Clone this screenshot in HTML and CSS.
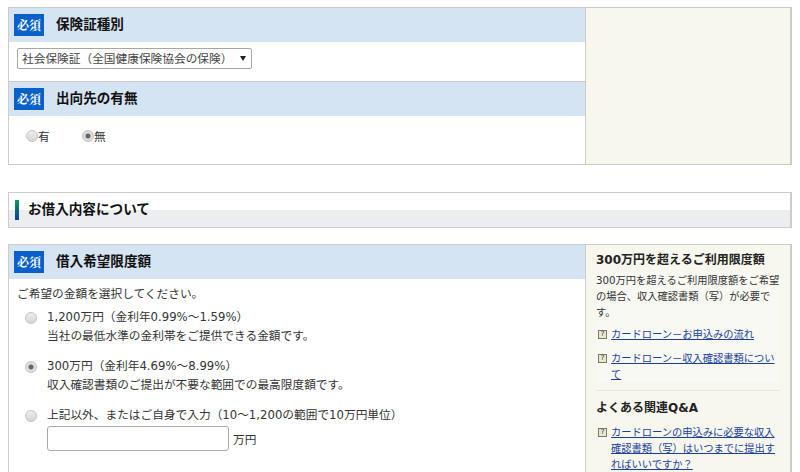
FILE: index.html
```html
<!DOCTYPE html>
<html lang="ja">
<head>
    <meta charset="UTF-8">
    <title>お借入内容について</title>
    <link rel="stylesheet" href="styles.css">
</head>
<body>
    <div class="panel panel-first">
        <div class="panel-main">
            <div class="field-head">
                <span class="badge">必須</span>
                <h3>保険証種別</h3>
            </div>
            <div class="field-select">
                <div class="select-wrap">
                    <select>
                        <option>社会保険証（全国健康保険協会の保険）</option>
                    </select>
                </div>
            </div>
            <div class="field-head field-head-line">
                <span class="badge">必須</span>
                <h3>出向先の有無</h3>
            </div>
            <div class="field-radios">
                <label class="radio-inline"><input type="radio" name="shukko">有</label>
                <label class="radio-inline"><input type="radio" name="shukko" checked>無</label>
            </div>
        </div>
        <div class="panel-side"></div>
    </div>

    <div class="section-title">
        <h2>お借入内容について</h2>
    </div>

    <div class="panel">
        <div class="panel-main">
            <div class="field-head">
                <span class="badge">必須</span>
                <h3>借入希望限度額</h3>
            </div>
            <div class="field-body">
                <p class="lead">ご希望の金額を選択してください。</p>
                <label class="option">
                    <input type="radio" name="limit">
                    <span>1,200万円（金利年0.99%～1.59%）<br>当社の最低水準の金利帯をご提供できる金額です。</span>
                </label>
                <label class="option">
                    <input type="radio" name="limit" checked>
                    <span>300万円（金利年4.69%～8.99%）<br>収入確認書類のご提出が不要な範囲での最高限度額です。</span>
                </label>
                <label class="option">
                    <input type="radio" name="limit">
                    <span>上記以外、またはご自身で入力（10～1,200の範囲で10万円単位）</span>
                </label>
                <div class="amount">
                    <input type="text">
                    <span>万円</span>
                </div>
            </div>
        </div>
        <div class="panel-side">
            <h4>300万円を超えるご利用限度額</h4>
            <div class="side-box">
                <p>300万円を超えるご利用限度額をご希望の場合、収入確認書類（写）が必要です。</p>
                <ul class="links">
                    <li><a href="#">カードローン－お申込みの流れ</a></li>
                    <li><a href="#">カードローン－収入確認書類について</a></li>
                </ul>
            </div>
            <hr>
            <h4>よくある関連Q&amp;A</h4>
            <ul class="links links-qa">
                <li><a href="#">カードローンの申込みに必要な収入確認書類（写）はいつまでに提出すればいいですか？</a></li>
            </ul>
        </div>
    </div>
</body>
</html>
```

FILE: styles.css
```css
html, body { height: 472px; overflow: hidden; }
body { margin: 0; padding: 0 8px; background: #fff; color: #333; font-family: "DejaVu Sans", "Noto Sans CJK JP", sans-serif; font-size: 11.7px; box-sizing: border-box; }

/* panels */
.panel { display: flex; border: 1px solid #ccc; border-right-width: 2px; background: #fff; }
.panel-first { margin-top: 7px; height: 158px; box-sizing: border-box; }
.panel-main { width: 576px; flex: none; border-right: 1px solid #ccc; }
.panel-side { flex: 1; background: #f7f7ee; padding: 7px 10px 0; box-sizing: border-box; }

/* field heading */
.field-head { display: flex; align-items: center; height: 34px; padding-left: 5px; background: #d5e4f3; box-sizing: border-box; }
.field-head-line { border-top: 1px solid #ccc; height: 35px; }
.field-head h3 { margin: 0 0 5px 12px; font-size: 13.6px; font-weight: bold; color: #111; }
.badge { width: 30px; height: 22px; line-height: 22px; text-align: center; background: #0a60c9; color: #fff; font-family: "Noto Serif CJK JP", "Noto Sans CJK JP", serif; font-size: 12px; font-weight: bold; }

.field-select { height: 39px; padding: 6px 0 0 8px; box-sizing: border-box; }
.select-wrap { position: relative; width: 235px; }
.select-wrap::after { content: ""; position: absolute; right: 6px; top: 8px; border-style: solid; border-width: 5px 3px 0; border-color: #222 transparent transparent; }
select { display: block; width: 235px; height: 21px; padding: 0 0 0 4px; border: 1px solid #a6a6a6; border-radius: 2px; background: #fff; color: #444; font: inherit; font-size: 11.7px; appearance: none; }

.field-radios { display: flex; padding: 11px 0 0 17px; }
.radio-inline { display: flex; align-items: center; width: 56px; color: #333; }
.radio-inline input { margin-top: -2px; }

/* radio looks like the older grey one */
input[type="radio"] { appearance: none; flex: none; width: 10px; height: 10px; margin: 0; border: 1px solid #c4c4c4; border-radius: 50%; background: linear-gradient(#eee, #d6d6d6); box-sizing: content-box; }
input[type="radio"]:checked { background: radial-gradient(circle, #666 0 2px, #ddd 3px); }

/* section title */
.section-title { display: flex; align-items: center; height: 36px; margin-top: 27px; margin-bottom: 16px; padding-left: 6px; border: 1px solid #ccc; border-right-width: 2px; background: linear-gradient(#fff 0 17px, #ecedf1 17px); box-sizing: border-box; }
.section-title h2 { margin: 0; padding: 0 0 2px 9px; border-left: 4px solid #0a6d78; border-image: linear-gradient(#0a9a6a, #0b3a8f) 1; font-size: 13.6px; font-weight: bold; line-height: 18px; color: #111; }

/* limit options */
.field-body { padding: 7px 8px 0; }
.lead { margin: 0 0 5px; line-height: 17px; }
.option { display: flex; align-items: flex-start; padding-left: 8px; margin-bottom: 11px; line-height: 19px; }
.option input { margin: 4px 10px 0 0; }
.amount { display: flex; align-items: center; margin: -10px 0 0 30px; }
.amount input { width: 182px; height: 25px; padding: 0 4px; border: 1px solid #aaa; border-radius: 3px; box-sizing: border-box; }
.amount span { margin-left: 4px; }

/* side column */
.panel-side h4 { margin: 0 0 3px; font-size: 12px; font-weight: bold; line-height: 17px; color: #222; }
.side-box { background: #f9f9f4; border-radius: 3px; }
.panel-side p { margin: 0 0 6px; font-size: 10.25px; line-height: 16px; }
.panel-side hr { height: 1px; margin: 6px 0 9px; border: 0; background: #e8e8df; }
.links { margin: 0; padding: 0; list-style: none; font-size: 10.25px; line-height: 16px; }
.links-qa { margin-top: 7px; }
.links li { position: relative; padding-left: 15px; margin-bottom: 8px; }
.links li::before { content: "?"; position: absolute; left: 2px; top: 4px; width: 7px; height: 7px; border: 1px solid #777; background: #eee8c8; color: #333; font-size: 7px; line-height: 7px; text-align: center; }
.links a { color: #1a3f9f; }
```
